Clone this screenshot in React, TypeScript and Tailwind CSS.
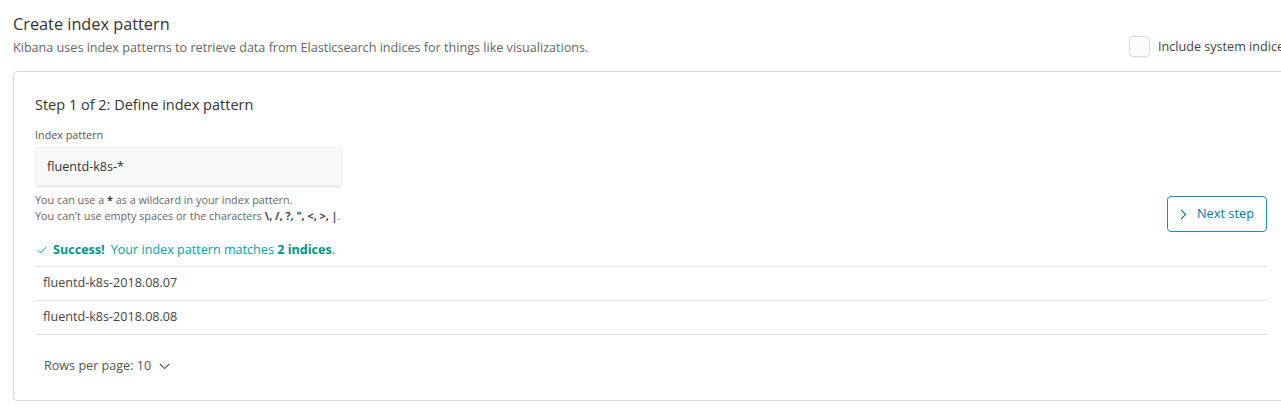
import { useState } from "react";

const indices = ["fluentd-k8s-2018.08.07", "fluentd-k8s-2018.08.08"];

function Check() {
  return (
    <svg width="10" height="8" viewBox="0 0 10 8" fill="none" className="mr-[6px]">
      <path d="M0.8 4.2 L3.6 7 L9.2 1" stroke="#00a69b" strokeWidth="1" />
    </svg>
  );
}

function ChevronRight() {
  return (
    <svg width="7" height="11" viewBox="0 0 7 11" fill="none">
      <path d="M1 0.8 L5.6 5.5 L1 10.2" stroke="#0079a5" strokeWidth="1.1" />
    </svg>
  );
}

function ChevronDown() {
  return (
    <svg width="11" height="7" viewBox="0 0 11 7" fill="none">
      <path d="M0.8 1 L5.5 5.6 L10.2 1" stroke="#555" strokeWidth="1.1" />
    </svg>
  );
}

export default function App() {
  const [pattern, setPattern] = useState("fluentd-k8s-*");

  return (
    <div className="w-full overflow-hidden bg-white text-[#3f3f3f]" style={{ fontFamily: '"Open Sans", sans-serif' }}>
      <div className="ml-[13px] w-[1277px] pt-[12px]">
        <div className="flex items-end justify-between">
          <div>
            <h1 className="text-[16.3px] leading-[24px] text-[#333]">Create index pattern</h1>
            <p className="mt-[3px] text-[12.6px] leading-[18px] text-[#666]">
              Kibana uses index patterns to retrieve data from Elasticsearch indices for things like visualizations.
            </p>
          </div>
          <label className="flex items-center gap-[8px]">
            <span className="block size-[21px] rounded-[4px] border border-[#dcdcdc] bg-[#fbfcfd] shadow-[0_1px_2px_rgba(0,0,0,0.06)]" />
            <span className="text-[12.6px] leading-[18px] text-[#444]">Include system indices</span>
          </label>
        </div>

        <div className="mt-[14px] rounded-[4px] border border-[#d9d9d9] bg-white px-[21px] pt-[23px] pb-[25px] shadow-[0_1px_3px_rgba(0,0,0,0.08)]">
          <h2 className="text-[14.5px] leading-[20px] text-[#333]">Step 1 of 2: Define index pattern</h2>

          <div className="mt-[13px] flex justify-between">
            <div className="pb-[8px]">
              <div className="text-[10.8px] leading-[14px] text-[#555]">Index pattern</div>
              <input
                value={pattern}
                onChange={(e) => setPattern(e.target.value)}
                className="mt-[5px] block h-[39px] w-[307px] rounded-[2px] bg-[#f8f9fa] px-[12px] text-[12.6px] text-[#333] outline-none shadow-[inset_0_0_0_1px_rgba(0,0,0,0.04),0_2px_2px_-1px_rgba(0,0,0,0.15)]"
              />
              <div className="mt-[6px] text-[10.8px] leading-[16px] text-[#666]">
                <div>
                  You can use a <strong className="font-bold text-[#444]">*</strong> as a wildcard in your index pattern.
                </div>
                <div>
                  You can't use empty spaces or the characters <strong className="font-bold text-[#444]">\, /, ?, ", &lt;, &gt;, |</strong>.
                </div>
              </div>
            </div>
            <button className="mt-[68px] mr-[1px] flex h-[36px] w-[100px] items-center justify-center gap-[10px] self-start rounded-[4px] border border-[#1c8cb8] text-[12.8px] text-[#0079a5]">
              <ChevronRight />
              <span>Next step</span>
            </button>
          </div>

          <div className="mt-[9px] flex items-center pl-[2px] text-[12.6px] leading-[18px] text-[#00a69b]">
            <Check />
            <strong className="font-bold text-[#019487]">Success!</strong>
            <span className="ml-[6px]">
              Your index pattern matches <strong className="font-bold text-[#019487]">2 indices</strong>.
            </span>
          </div>

          <div className="mt-[7px] mr-[1px] border-b border-[#e0e0e0]">
            {indices.map((name) => (
              <div key={name} className="flex h-[34px] items-center border-t border-[#e0e0e0] px-[8px] text-[12.6px] text-[#444]">
                {name}
              </div>
            ))}
          </div>

          <div className="mt-[22px] flex items-center gap-[8px] pl-[9px] text-[12.6px] leading-[18px] text-[#555]">
            <span>Rows per page: 10</span>
            <ChevronDown />
          </div>
        </div>
      </div>
    </div>
  );
}
